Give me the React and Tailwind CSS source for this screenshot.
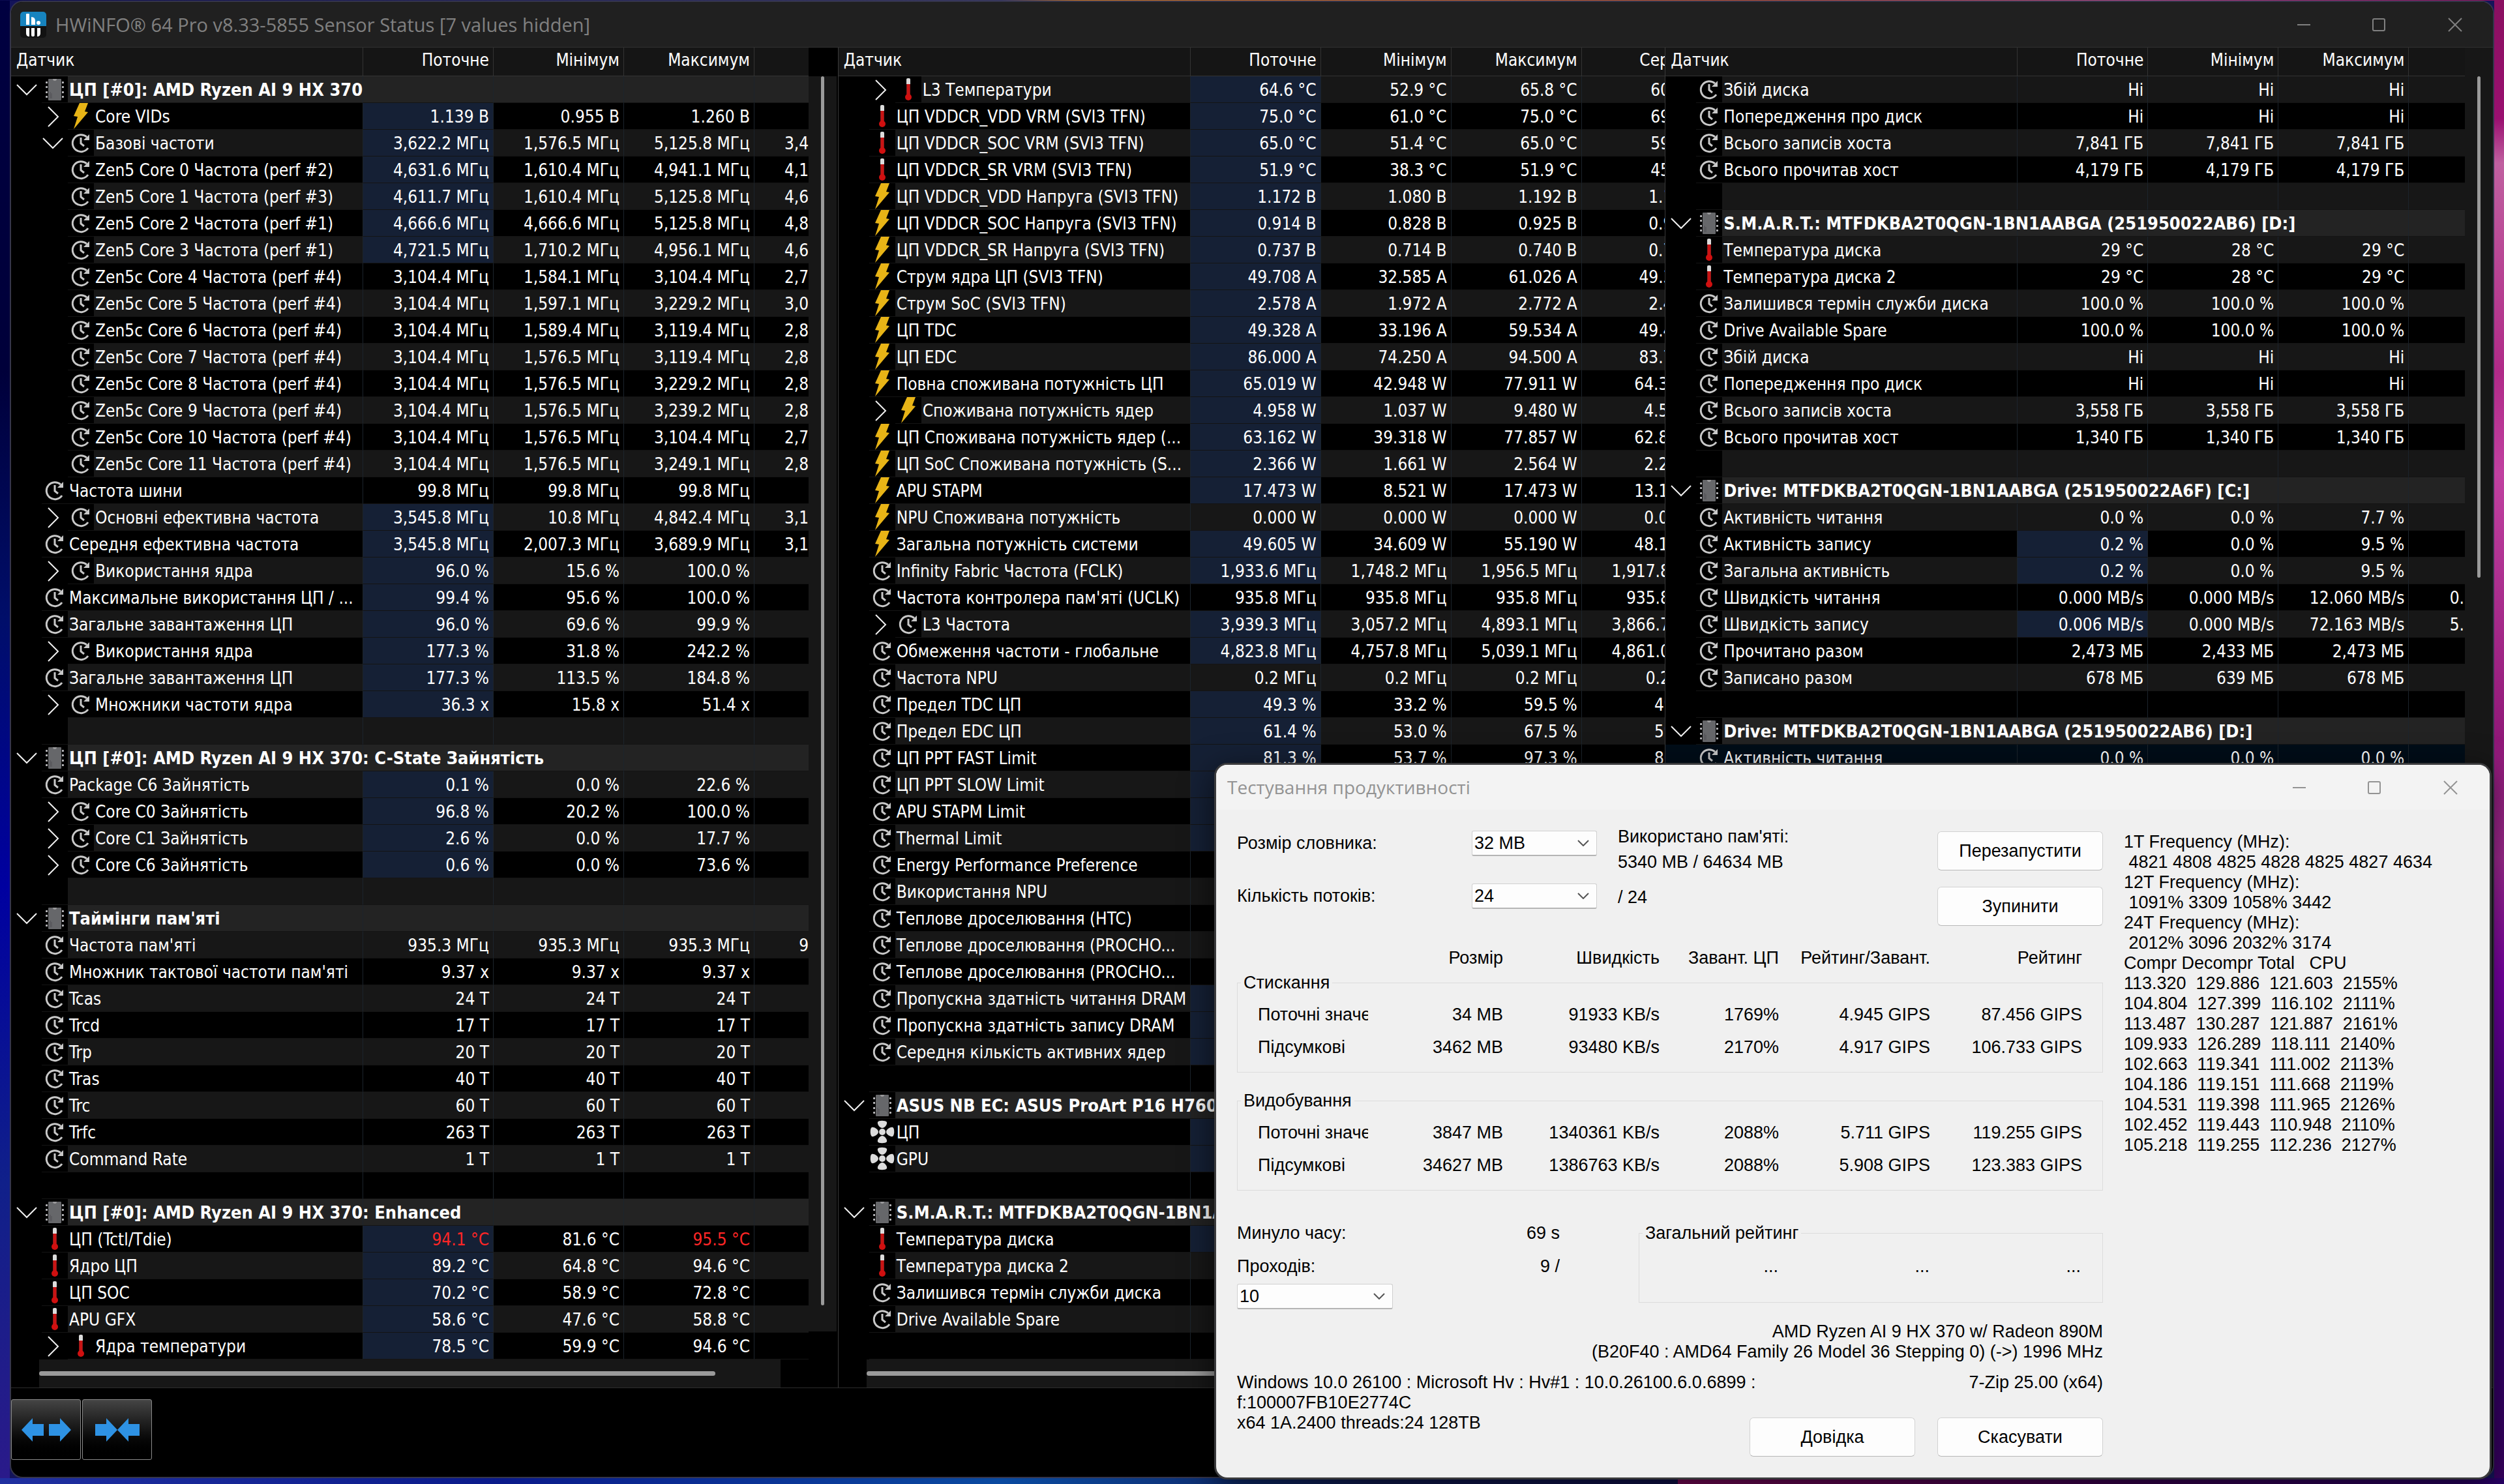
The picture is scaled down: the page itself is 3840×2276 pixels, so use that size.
import React from 'react';

// Рядки датчиків: [тип, рівень, стрілка, назва, поточне, мінімум, максимум, середнє, підсвітка]
// типи: chip (заголовок групи), clock, bolt, temp, fan, blank
const cpuRows = [
    ['chip', 0, 'down', 'ЦП [#0]: AMD Ryzen AI 9 HX 370'],
    ['bolt', 1, 'right', 'Core VIDs', '1.139 В', '0.955 В', '1.260 В', '', true],
    ['clock', 1, 'down', 'Базові частоти', '3,622.2 МГц', '1,576.5 МГц', '5,125.8 МГц', '3,412.0 МГц', true],
    ['clock', 1, '', 'Zen5 Core 0 Частота (perf #2)', '4,631.6 МГц', '1,610.4 МГц', '4,941.1 МГц', '4,180.2 МГц', true],
    ['clock', 1, '', 'Zen5 Core 1 Частота (perf #3)', '4,611.7 МГц', '1,610.4 МГц', '5,125.8 МГц', '4,602.4 МГц', true],
    ['clock', 1, '', 'Zen5 Core 2 Частота (perf #1)', '4,666.6 МГц', '4,666.6 МГц', '5,125.8 МГц', '4,802.1 МГц', true],
    ['clock', 1, '', 'Zen5 Core 3 Частота (perf #1)', '4,721.5 МГц', '1,710.2 МГц', '4,956.1 МГц', '4,620.7 МГц', true],
    ['clock', 1, '', 'Zen5c Core 4 Частота (perf #4)', '3,104.4 МГц', '1,584.1 МГц', '3,104.4 МГц', '2,790.3 МГц'],
    ['clock', 1, '', 'Zen5c Core 5 Частота (perf #4)', '3,104.4 МГц', '1,597.1 МГц', '3,229.2 МГц', '3,012.6 МГц'],
    ['clock', 1, '', 'Zen5c Core 6 Частота (perf #4)', '3,104.4 МГц', '1,589.4 МГц', '3,119.4 МГц', '2,840.5 МГц'],
    ['clock', 1, '', 'Zen5c Core 7 Частота (perf #4)', '3,104.4 МГц', '1,576.5 МГц', '3,119.4 МГц', '2,831.9 МГц'],
    ['clock', 1, '', 'Zen5c Core 8 Частота (perf #4)', '3,104.4 МГц', '1,576.5 МГц', '3,229.2 МГц', '2,865.0 МГц'],
    ['clock', 1, '', 'Zen5c Core 9 Частота (perf #4)', '3,104.4 МГц', '1,576.5 МГц', '3,239.2 МГц', '2,811.3 МГц'],
    ['clock', 1, '', 'Zen5c Core 10 Частота (perf #4)', '3,104.4 МГц', '1,576.5 МГц', '3,104.4 МГц', '2,795.8 МГц'],
    ['clock', 1, '', 'Zen5c Core 11 Частота (perf #4)', '3,104.4 МГц', '1,576.5 МГц', '3,249.1 МГц', '2,820.1 МГц'],
    ['clock', 0, '', 'Частота шини', '99.8 МГц', '99.8 МГц', '99.8 МГц', ''],
    ['clock', 1, 'right', 'Основні ефективна частота', '3,545.8 МГц', '10.8 МГц', '4,842.4 МГц', '3,190.2 МГц', true],
    ['clock', 0, '', 'Середня ефективна частота', '3,545.8 МГц', '2,007.3 МГц', '3,689.9 МГц', '3,190.2 МГц', true],
    ['clock', 1, 'right', 'Використання ядра', '96.0 %', '15.6 %', '100.0 %', '', true],
    ['clock', 0, '', 'Максимальне використання ЦП / ...', '99.4 %', '95.6 %', '100.0 %', '', true],
    ['clock', 0, '', 'Загальне завантаження ЦП', '96.0 %', '69.6 %', '99.9 %', '', true],
    ['clock', 1, 'right', 'Використання ядра', '177.3 %', '31.8 %', '242.2 %', '', true],
    ['clock', 0, '', 'Загальне завантаження ЦП', '177.3 %', '113.5 %', '184.8 %', '', true],
    ['clock', 1, 'right', 'Множники частоти ядра', '36.3 x', '15.8 x', '51.4 x', '', true],
    ['blank', 0],
    ['chip', 0, 'down', 'ЦП [#0]: AMD Ryzen AI 9 HX 370: C-State Зайнятість'],
    ['clock', 0, '', 'Package C6 Зайнятість', '0.1 %', '0.0 %', '22.6 %', '', true],
    ['clock', 1, 'right', 'Core C0 Зайнятість', '96.8 %', '20.2 %', '100.0 %', '', true],
    ['clock', 1, 'right', 'Core C1 Зайнятість', '2.6 %', '0.0 %', '17.7 %', '', true],
    ['clock', 1, 'right', 'Core C6 Зайнятість', '0.6 %', '0.0 %', '73.6 %', '', true],
    ['blank', 0],
    ['chip', 0, 'down', "Таймінги пам'яті"],
    ['clock', 0, '', "Частота пам'яті", '935.3 МГц', '935.3 МГц', '935.3 МГц', '935.3 МГц'],
    ['clock', 0, '', "Множник тактової частоти пам'яті", '9.37 x', '9.37 x', '9.37 x', ''],
    ['clock', 0, '', 'Tcas', '24 T', '24 T', '24 T', ''],
    ['clock', 0, '', 'Trcd', '17 T', '17 T', '17 T', ''],
    ['clock', 0, '', 'Trp', '20 T', '20 T', '20 T', ''],
    ['clock', 0, '', 'Tras', '40 T', '40 T', '40 T', ''],
    ['clock', 0, '', 'Trc', '60 T', '60 T', '60 T', ''],
    ['clock', 0, '', 'Trfc', '263 T', '263 T', '263 T', ''],
    ['clock', 0, '', 'Command Rate', '1 T', '1 T', '1 T', ''],
    ['blank', 0],
    ['chip', 0, 'down', 'ЦП [#0]: AMD Ryzen AI 9 HX 370: Enhanced'],
    ['temp', 0, '', 'ЦП (Tctl/Tdie)', '94.1 °C', '81.6 °C', '95.5 °C', '', true],
    ['temp', 0, '', 'Ядро ЦП', '89.2 °C', '64.8 °C', '94.6 °C', '', true],
    ['temp', 0, '', 'ЦП SOC', '70.2 °C', '58.9 °C', '72.8 °C', '', true],
    ['temp', 0, '', 'APU GFX', '58.6 °C', '47.6 °C', '58.8 °C', '', true],
    ['temp', 1, 'right', 'Ядра температури', '78.5 °C', '59.9 °C', '94.6 °C', '', true],
];

const powerRows = [
    ['temp', 1, 'right', 'L3 Температури', '64.6 °C', '52.9 °C', '65.8 °C', '60.4 °C', true],
    ['temp', 0, '', 'ЦП VDDCR_VDD VRM (SVI3 TFN)', '75.0 °C', '61.0 °C', '75.0 °C', '69.2 °C', true],
    ['temp', 0, '', 'ЦП VDDCR_SOC VRM (SVI3 TFN)', '65.0 °C', '51.4 °C', '65.0 °C', '59.3 °C', true],
    ['temp', 0, '', 'ЦП VDDCR_SR VRM (SVI3 TFN)', '51.9 °C', '38.3 °C', '51.9 °C', '45.8 °C', true],
    ['bolt', 0, '', 'ЦП VDDCR_VDD Напруга (SVI3 TFN)', '1.172 В', '1.080 В', '1.192 В', '1.154 В', true],
    ['bolt', 0, '', 'ЦП VDDCR_SOC Напруга (SVI3 TFN)', '0.914 В', '0.828 В', '0.925 В', '0.908 В', true],
    ['bolt', 0, '', 'ЦП VDDCR_SR Напруга (SVI3 TFN)', '0.737 В', '0.714 В', '0.740 В', '0.731 В', true],
    ['bolt', 0, '', 'Струм ядра ЦП (SVI3 TFN)', '49.708 А', '32.585 А', '61.026 А', '49.315 А', true],
    ['bolt', 0, '', 'Струм SoC (SVI3 TFN)', '2.578 А', '1.972 А', '2.772 А', '2.410 А', true],
    ['bolt', 0, '', 'ЦП TDC', '49.328 А', '33.196 А', '59.534 А', '49.420 А', true],
    ['bolt', 0, '', 'ЦП EDC', '86.000 А', '74.250 А', '94.500 А', '83.711 А', true],
    ['bolt', 0, '', 'Повна споживана потужність ЦП', '65.019 W', '42.948 W', '77.911 W', '64.302 W', true],
    ['bolt', 1, 'right', 'Споживана потужність ядер', '4.958 W', '1.037 W', '9.480 W', '4.512 W', true],
    ['bolt', 0, '', 'ЦП Споживана потужність ядер (...', '63.162 W', '39.318 W', '77.857 W', '62.808 W', true],
    ['bolt', 0, '', 'ЦП SoC Споживана потужність (S...', '2.366 W', '1.661 W', '2.564 W', '2.214 W', true],
    ['bolt', 0, '', 'APU STAPM', '17.473 W', '8.521 W', '17.473 W', '13.105 W', true],
    ['bolt', 0, '', 'NPU Споживана потужність', '0.000 W', '0.000 W', '0.000 W', '0.000 W'],
    ['bolt', 0, '', 'Загальна потужність системи', '49.605 W', '34.609 W', '55.190 W', '48.120 W', true],
    ['clock', 0, '', 'Infinity Fabric Частота (FCLK)', '1,933.6 МГц', '1,748.2 МГц', '1,956.5 МГц', '1,917.8 МГц', true],
    ['clock', 0, '', "Частота контролера пам'яті (UCLK)", '935.8 МГц', '935.8 МГц', '935.8 МГц', '935.8 МГц'],
    ['clock', 1, 'right', 'L3 Частота', '3,939.3 МГц', '3,057.2 МГц', '4,893.1 МГц', '3,866.7 МГц', true],
    ['clock', 0, '', 'Обмеження частоти - глобальне', '4,823.8 МГц', '4,757.8 МГц', '5,039.1 МГц', '4,861.0 МГц', true],
    ['clock', 0, '', 'Частота NPU', '0.2 МГц', '0.2 МГц', '0.2 МГц', '0.2 МГц'],
    ['clock', 0, '', 'Предел TDC ЦП', '49.3 %', '33.2 %', '59.5 %', '49.1 %', true],
    ['clock', 0, '', 'Предел EDC ЦП', '61.4 %', '53.0 %', '67.5 %', '59.8 %', true],
    ['clock', 0, '', 'ЦП PPT FAST Limit', '81.3 %', '53.7 %', '97.3 %', '80.4 %', true],
    ['clock', 0, '', 'ЦП PPT SLOW Limit', '', '', '', '', true],
    ['clock', 0, '', 'APU STAPM Limit', '', '', '', '', true],
    ['clock', 0, '', 'Thermal Limit', '', '', '', '', true],
    ['clock', 0, '', 'Energy Performance Preference'],
    ['clock', 0, '', 'Використання NPU'],
    ['clock', 0, '', 'Теплове дроселювання (HTC)'],
    ['clock', 0, '', 'Теплове дроселювання (PROCHO...'],
    ['clock', 0, '', 'Теплове дроселювання (PROCHO...'],
    ['clock', 0, '', 'Пропускна здатність читання DRAM', '', '', '', '', true],
    ['clock', 0, '', 'Пропускна здатність запису DRAM', '', '', '', '', true],
    ['clock', 0, '', 'Середня кількість активних ядер', '', '', '', '', true],
    ['blank', 0],
    ['chip', 0, 'down', 'ASUS NB EC: ASUS ProArt P16 H760'],
    ['fan', 0, '', 'ЦП', '', '', '', '', true],
    ['fan', 0, '', 'GPU', '', '', '', '', true],
    ['blank', 0],
    ['chip', 0, 'down', 'S.M.A.R.T.: MTFDKBA2T0QGN-1BN1A'],
    ['temp', 0, '', 'Температура диска', '', '', '', '', true],
    ['temp', 0, '', 'Температура диска 2'],
    ['clock', 0, '', 'Залишився термін служби диска'],
    ['clock', 0, '', 'Drive Available Spare'],
    ['blank', 0],
];

const driveRows = [
    ['clock', 0, '', 'Збій диска', 'Ні', 'Ні', 'Ні', ''],
    ['clock', 0, '', 'Попередження про диск', 'Ні', 'Ні', 'Ні', ''],
    ['clock', 0, '', 'Всього записів хоста', '7,841 ГБ', '7,841 ГБ', '7,841 ГБ', ''],
    ['clock', 0, '', 'Всього прочитав хост', '4,179 ГБ', '4,179 ГБ', '4,179 ГБ', ''],
    ['blank', 0],
    ['chip', 0, 'down', 'S.M.A.R.T.: MTFDKBA2T0QGN-1BN1AABGA (251950022AB6) [D:]'],
    ['temp', 0, '', 'Температура диска', '29 °C', '28 °C', '29 °C', ''],
    ['temp', 0, '', 'Температура диска 2', '29 °C', '28 °C', '29 °C', ''],
    ['clock', 0, '', 'Залишився термін служби диска', '100.0 %', '100.0 %', '100.0 %', ''],
    ['clock', 0, '', 'Drive Available Spare', '100.0 %', '100.0 %', '100.0 %', ''],
    ['clock', 0, '', 'Збій диска', 'Ні', 'Ні', 'Ні', ''],
    ['clock', 0, '', 'Попередження про диск', 'Ні', 'Ні', 'Ні', ''],
    ['clock', 0, '', 'Всього записів хоста', '3,558 ГБ', '3,558 ГБ', '3,558 ГБ', ''],
    ['clock', 0, '', 'Всього прочитав хост', '1,340 ГБ', '1,340 ГБ', '1,340 ГБ', ''],
    ['blank', 0],
    ['chip', 0, 'down', 'Drive: MTFDKBA2T0QGN-1BN1AABGA (251950022A6F) [C:]'],
    ['clock', 0, '', 'Активність читання', '0.0 %', '0.0 %', '7.7 %', ''],
    ['clock', 0, '', 'Активність запису', '0.2 %', '0.0 %', '9.5 %', '', true],
    ['clock', 0, '', 'Загальна активність', '0.2 %', '0.0 %', '9.5 %', '', true],
    ['clock', 0, '', 'Швидкість читання', '0.000 MB/s', '0.000 MB/s', '12.060 MB/s', '0.801 MB/s'],
    ['clock', 0, '', 'Швидкість запису', '0.006 MB/s', '0.000 MB/s', '72.163 MB/s', '5.512 MB/s', true],
    ['clock', 0, '', 'Прочитано разом', '2,473 МБ', '2,433 МБ', '2,473 МБ', ''],
    ['clock', 0, '', 'Записано разом', '678 МБ', '639 МБ', '678 МБ', ''],
    ['blank', 0],
    ['chip', 0, 'down', 'Drive: MTFDKBA2T0QGN-1BN1AABGA (251950022AB6) [D:]'],
    ['selected', 0, '', 'Активність читання', '0.0 %', '0.0 %', '0.0 %', ''],
];

const compressRows = [
    ['Поточні значення', '34 MB', '91933 KB/s', '1769%', '4.945 GIPS', '87.456 GIPS'],
    ['Підсумкові', '3462 MB', '93480 KB/s', '2170%', '4.917 GIPS', '106.733 GIPS'],
];

const decompressRows = [
    ['Поточні значення', '3847 MB', '1340361 KB/s', '2088%', '5.711 GIPS', '119.255 GIPS'],
    ['Підсумкові', '34627 MB', '1386763 KB/s', '2088%', '5.908 GIPS', '123.383 GIPS'],
];

const benchLog = `1T Frequency (MHz):
 4821 4808 4825 4828 4825 4827 4634
12T Frequency (MHz):
 1091% 3309 1058% 3442
24T Frequency (MHz):
 2012% 3096 2032% 3174
Compr Decompr Total   CPU
113.320  129.886  121.603  2155%
104.804  127.399  116.102  2111%
113.487  130.287  121.887  2161%
109.933  126.289  118.111  2140%
102.663  119.341  111.002  2113%
104.186  119.151  111.668  2119%
104.531  119.398  111.965  2126%
102.452  119.443  110.948  2110%
105.218  119.255  112.236  2127%`;

function RowIcon({ type }) {
    if (type === 'chip') {
        return (
            <svg className="size-10" viewBox="0 0 40 40">
                <g fill="#b5b5b8">
                    <rect x="6" y="8" width="28" height="3" rx="1" />
                    <rect x="6" y="15" width="28" height="3" rx="1" />
                    <rect x="6" y="23" width="28" height="3" rx="1" />
                    <rect x="6" y="30" width="28" height="3" rx="1" />
                </g>
                <rect x="9" y="4" width="22" height="33" rx="1" fill="#000" />
                <rect x="10" y="4" width="20" height="33" rx="1" fill="#66676a" />
                <path d="M17 4a3 3 0 0 0 6 0z" fill="#9a9a9c" />
                <path d="M13 24v10M15 26v8" stroke="#505154" />
            </svg>
        );
    }
    if (type === 'bolt') {
        return (
            <svg className="size-10" viewBox="0 0 40 40">
                <path d="M18 0h13l-5 13 5 1L9 40l6-19-6-1z" fill="#e8b416" />
            </svg>
        );
    }
    if (type === 'temp') {
        return (
            <svg className="size-10" viewBox="0 0 40 40">
                <rect x="17" y="3" width="6" height="29" rx="2" fill="#dcdcdc" />
                <rect x="17" y="12" width="6" height="19" fill="#8a1a1a" />
                <rect x="18" y="12" width="4" height="19" fill="#c81414" />
                <circle cx="20" cy="32" r="5" fill="#d01010" />
            </svg>
        );
    }
    if (type === 'fan') {
        return (
            <svg className="size-10" viewBox="0 0 40 40" fill="#dcdcdc">
                <path d="M13 5c1-3 12-3 14 0 1 3-3 9-7 9s-8-6-7-9z" />
                <path d="M13 35c1 3 12 3 14 0 1-3-3-9-7-9s-8 6-7 9z" />
                <path d="M4 13c-3 1-3 12 0 14 3 1 10-3 10-7S7 12 4 13z" />
                <path d="M36 13c3 1 3 12 0 14-3 1-10-3-10-7s7-8 10-7z" />
                <circle cx="20" cy="20" r="5" />
            </svg>
        );
    }
    return (
        <svg className="size-10" viewBox="0 0 40 40" fill="none" stroke="#c8c8c8">
            <path d="M29 11A13 13 0 1 0 31 28" strokeWidth="3" />
            <path d="M33 7v9h-9z" fill="#c8c8c8" stroke="none" />
            <path d="M20 12v9l5 4" strokeWidth="3" />
        </svg>
    );
}

function Chevron({ dir }) {
    return (
        <svg className="size-10" viewBox="0 0 40 40" fill="none" stroke="#f0f0f0" strokeWidth="2">
            {dir === 'down' ? <path d="M5 13l15 15 15-15" /> : <path d="M13 6l15 15-15 15" />}
        </svg>
    );
}

function SensorRow({ row, index }) {
    const [type, level, arrow, name, current, min, max, avg, hot] = row;
    const header = type === 'chip';
    const selected = type === 'selected';
    let bg = index % 2 ? 'bg-black' : 'bg-[#171717]';
    if (header) bg = 'bg-[#232323]';
    if (selected) bg = 'bg-[#000d18]';
    const gutter = selected ? '' : 'bg-black';
    const over = name && name.includes('Tctl');
    return (
        <tr className={bg}>
            <td className="p-0">
                <div className="flex h-[41px]">
                    <div className={`flex shrink-0 justify-end pr-[3px] ${gutter} ${level ? 'w-[87px]' : 'w-[47px]'}`}>
                        {arrow && <Chevron dir={arrow} />}
                    </div>
                    <div className={`w-10 shrink-0 border-b border-[#141414] ${gutter}`}>
                        {type !== 'blank' && <RowIcon type={type} />}
                    </div>
                    <div className={`flex-1 border-b border-[#141414] pl-[2px] whitespace-nowrap leading-[42px] ${header ? 'text-[27px] font-bold' : ''}`}>
                        {name}
                    </div>
                </div>
            </td>
            {[current, min, max, avg].map((value, i) => (
                <td
                    key={i}
                    className={`border-b border-l border-b-[#141414] border-l-[#1c242c] p-0 pt-[2px] pr-[6px] text-right whitespace-nowrap leading-[36px] ${i === 0 && hot ? 'bg-[#152035]' : ''} ${over && i !== 1 ? 'text-[#ff2626]' : ''}`}
                >
                    {value}
                </td>
            ))}
        </tr>
    );
}

function SensorTable({ rows, avgTitle }) {
    return (
        <table className="w-[1339px] table-fixed border-separate border-spacing-0">
            <colgroup>
                <col className="w-[539px]" />
                <col className="w-[200px]" />
                <col className="w-[200px]" />
                <col className="w-[200px]" />
                <col className="w-[200px]" />
            </colgroup>
            <thead>
                <tr className="h-[44px] bg-[#151515] align-top leading-[38px]">
                    <th className="border-b border-[#333333] p-0 pl-[8px] text-left font-normal">Датчик</th>
                    {['Поточне', 'Мінімум', 'Максимум', avgTitle].map((title, i) => (
                        <th key={i} className="border-b border-l border-[#333333] p-0 pr-[6px] text-right font-normal">{title}</th>
                    ))}
                </tr>
            </thead>
            <tbody>
                {rows.map((row, i) => <SensorRow key={i} row={row} index={i} />)}
            </tbody>
        </table>
    );
}

function WindowButtons() {
    return (
        <div className="flex h-full items-center gap-[74px]">
            <button type="button" aria-label="Згорнути">
                <svg className="h-[22px] w-[42px]" viewBox="0 0 42 22" fill="none" stroke="currentColor" strokeWidth="2"><path d="M11 11h20" /></svg>
            </button>
            <button type="button" aria-label="Розгорнути">
                <svg className="h-[22px] w-[42px]" viewBox="0 0 42 22" fill="none" stroke="currentColor" strokeWidth="2"><rect x="11" y="2" width="18" height="18" rx="2" /></svg>
            </button>
            <button type="button" aria-label="Закрити">
                <svg className="h-[22px] w-[42px]" viewBox="0 0 42 22" fill="none" stroke="currentColor" strokeWidth="2"><path d="M11 1l20 20M31 1L11 21" /></svg>
            </button>
        </div>
    );
}

function Combo({ id, value, wide }) {
    return (
        <div className={`relative h-[39px] ${wide ? 'w-[239px]' : 'w-[192px]'}`}>
            <select
                id={id}
                defaultValue={value}
                className="h-full w-full appearance-none rounded-[3px] border border-b-2 border-[#d0d0d0] border-b-[#b5b5b5] bg-[#fdfdfd] pl-[3px]"
            >
                <option>{value}</option>
            </select>
            <svg className="pointer-events-none absolute top-[14px] right-[12px] h-[10px] w-[18px]" viewBox="0 0 18 10" fill="none" stroke="#555" strokeWidth="2">
                <path d="M1 1l8 8 8-8" />
            </svg>
        </div>
    );
}

function DialogButton({ children }) {
    return (
        <button type="button" className="h-[60px] w-[254px] rounded-[6px] border border-[#d2d2d2] border-b-[#b8b8b8] bg-[#fdfdfd]">
            {children}
        </button>
    );
}

function ResultGroup({ title, rows }) {
    return (
        <fieldset className="min-w-0 border border-[#dcdcdc] pt-[8px] pb-[13px]">
            <legend className="ml-[5px] px-[4px]">{title}</legend>
            <table className="w-full table-fixed">
                <tbody>
                    {rows.map((row, i) => (
                        <tr key={i} className="h-[50px]">
                            <th className="w-[200px] p-0 pl-[31px] text-left font-normal">
                                <div className="overflow-hidden whitespace-nowrap">{row[0]}</div>
                            </th>
                            <td className="w-[207px] text-right">{row[1]}</td>
                            <td className="w-[240px] text-right">{row[2]}</td>
                            <td className="w-[183px] text-right">{row[3]}</td>
                            <td className="w-[232px] text-right">{row[4]}</td>
                            <td className="pr-[31px] text-right">{row[5]}</td>
                        </tr>
                    ))}
                </tbody>
            </table>
        </fieldset>
    );
}

function BenchmarkDialog() {
    return (
        <section className="absolute right-[19px] bottom-[7px] w-[1959px] overflow-hidden rounded-[20px] border-3 border-[#3a3a3c] bg-[#f0f0f0] font-['Liberation_Sans',Arial,sans-serif] text-[27px] leading-[31px] text-black shadow-[0_12px_50px_rgba(0,0,0,0.6)]">
            <header className="flex h-[69px] items-center justify-between bg-[#f3f3f3] pr-[39px] pl-[17px] text-[#939393]">
                <h2 className="font-['Open_Sans','Noto_Sans',sans-serif] text-[28px]">Тестування продуктивності</h2>
                <WindowButtons />
            </header>

            <div className="flex gap-[32px] pt-[22px] pb-[32px] pl-[32px]">
                <div className="w-[1328px] shrink-0">
                    {/* Параметри тесту */}
                    <div className="flex">
                        <div className="flex flex-col gap-[42px] pt-[10px]">
                            <div className="flex items-center">
                                <label htmlFor="dict" className="w-[360px]">Розмір словника:</label>
                                <Combo id="dict" value="32 MB" />
                            </div>
                            <div className="flex items-center">
                                <label htmlFor="threads" className="w-[360px]">Кількість потоків:</label>
                                <Combo id="threads" value="24" />
                            </div>
                        </div>
                        <div className="flex-1 pl-[32px] leading-[39px]">
                            <p>Використано пам'яті:</p>
                            <p>5340 MB / 64634 MB</p>
                            <p className="mt-[15px]">/ 24</p>
                        </div>
                        <div className="flex flex-col gap-[25px] pt-[11px]">
                            <DialogButton>Перезапустити</DialogButton>
                            <DialogButton>Зупинити</DialogButton>
                        </div>
                    </div>

                    {/* Результати */}
                    <div className="mt-[34px] mb-[7px] flex text-right">
                        <span className="w-[408px]">Розмір</span>
                        <span className="w-[240px]">Швидкість</span>
                        <span className="w-[183px]">Завант. ЦП</span>
                        <span className="w-[232px]">Рейтинг/Завант.</span>
                        <span className="w-[233px]">Рейтинг</span>
                    </div>
                    <div className="flex flex-col gap-[28px]">
                        <ResultGroup title="Стискання" rows={compressRows} />
                        <ResultGroup title="Видобування" rows={decompressRows} />
                    </div>

                    {/* Час, проходи та загальний рейтинг */}
                    <div className="mt-[50px] flex justify-between">
                        <div className="w-[495px]">
                            <div className="flex justify-between">
                                <span>Минуло часу:</span>
                                <span>69 s</span>
                            </div>
                            <div className="mt-[20px] mb-[11px] flex justify-between">
                                <label htmlFor="passes">Проходів:</label>
                                <span>9 /</span>
                            </div>
                            <Combo id="passes" value="10" wide />
                        </div>
                        <fieldset className="flex h-[122px] w-[712px] border border-[#dcdcdc] pt-[20px] text-right">
                            <legend className="ml-[5px] px-[4px] text-left">Загальний рейтинг</legend>
                            <span className="w-[213px]">...</span>
                            <span className="w-[232px]">...</span>
                            <span className="w-[232px]">...</span>
                        </fieldset>
                    </div>

                    {/* Відомості про систему */}
                    <div className="mt-[19px] text-right">
                        <p>AMD Ryzen AI 9 HX 370 w/ Radeon 890M</p>
                        <p>(B20F40 : AMD64 Family 26 Model 36 Stepping 0) (-&gt;) 1996 MHz</p>
                    </div>
                    <div className="mt-[16px] flex justify-between">
                        <p>Windows 10.0 26100 : Microsoft Hv : Hv#1 : 10.0.26100.6.0.6899 :</p>
                        <p>7-Zip 25.00 (x64)</p>
                    </div>
                    <div className="flex justify-between">
                        <p>f:100007FB10E2774C<br />x64 1A.2400 threads:24 128TB</p>
                        <div className="mt-[38px] flex gap-[34px]">
                            <DialogButton>Довідка</DialogButton>
                            <DialogButton>Скасувати</DialogButton>
                        </div>
                    </div>
                </div>
                <pre className="mt-[12px] font-['Liberation_Sans',Arial,sans-serif]">{benchLog}</pre>
            </div>
        </section>
    );
}

function ArrowLeft() {
    return <path d="M0 18L17 0v9h17v18H17v9z" />;
}

function ToolButton({ label, children }) {
    return (
        <button type="button" aria-label={label} className="flex h-[93px] w-[107px] items-center justify-center rounded-[3px] border border-[#8a8a8a] bg-gradient-to-b from-[#454545] to-black">
            {children}
        </button>
    );
}

export default function App() {
    return (
        <div className="relative flex min-h-screen flex-col overflow-hidden bg-[#14145a]">
            {/* Смуги шпалер навколо вікна */}
            <div className="h-px bg-[linear-gradient(90deg,#0a0a50_0%,#3a3a6a_40%,#c8762a_43%,#b8503a_70%,#b04a8a_85%,#8a1060_100%)]" />
            <div className="flex flex-1">
                <div className="w-[15px] shrink-0 bg-[linear-gradient(180deg,#000040_0%,#00003a_25%,#000e6a_42%,#0000a0_60%,#10208a_80%,#2a1a8a_100%)]" />

                <main className="flex min-w-0 flex-1 flex-col overflow-hidden rounded-[20px] border-2 border-[#35354a] bg-black font-['DejaVu_Sans_Condensed','Noto_Sans',sans-serif] text-[26px] text-white">
                    <header className="flex h-[70px] items-center justify-between border-b border-[#303030] bg-[#202020] pr-[37px] pl-[14px] text-[#808080]">
                        <div className="flex items-center gap-[14px]">
                            <svg className="size-10" viewBox="0 0 40 40">
                                <rect width="40" height="40" rx="5" fill="#121212" />
                                <path d="M0 22V5a5 5 0 0 1 5-5h30a5 5 0 0 1 5 5v17z" fill="#1784bf" />
                                <g fill="#fff">
                                    <path d="M9 4q0-1 1-1h3q1 0 1 1v16H9z" />
                                    <path d="M17 8q6 0 6 6v6h-6z" />
                                    <circle cx="28" cy="17" r="3" />
                                    <path d="M9 25h5v13q-5 0-5-5zM17 25h5v11q0 2-3 2-2 0-2-2zM26 25h5v8q0 5-5 5z" />
                                </g>
                            </svg>
                            <h1 className="font-['Open_Sans','Noto_Sans',sans-serif] text-[29px]">HWiNFO® 64 Pro v8.33-5855 Sensor Status [7 values hidden]</h1>
                        </div>
                        <WindowButtons />
                    </header>

                    <div className="grid grid-cols-3 border-b border-[#2d2d2d]">
                        <div className="flex min-w-0 flex-col border-r border-[#3a3a3a]">
                            <div className="flex">
                                <div className="min-w-0 flex-1 overflow-hidden">
                                    <SensorTable rows={cpuRows} avgTitle="" />
                                </div>
                                <div className="mt-[44px] mr-[2px] mb-[43px] w-[43px] shrink-0 bg-[#171717] px-[19px] pb-[40px]">
                                    <div className="h-full rounded-full bg-[#9a9a9a]" />
                                </div>
                            </div>
                            <div className="mr-[88px] ml-[43px] h-[43px] bg-[#171717] pt-[18px] pr-[100px]">
                                <div className="h-[7px] rounded-full bg-[#9a9a9a]" />
                            </div>
                        </div>

                        <div className="flex min-w-0 flex-col overflow-hidden border-r border-[#3a3a3a]">
                            <SensorTable rows={powerRows} avgTitle="Середнє" />
                            <div className="ml-[43px] h-[43px] bg-[#171717] pt-[18px] pr-[100px]">
                                <div className="h-[7px] rounded-full bg-[#9a9a9a]" />
                            </div>
                        </div>

                        <div className="flex min-w-0 bg-[#171717]">
                            <div className="min-w-0 flex-1 overflow-hidden bg-black">
                                <SensorTable rows={driveRows} avgTitle="" />
                            </div>
                            <div className="mt-[44px] w-[43px] shrink-0 px-[19px]">
                                <div className="h-[769px] rounded-full bg-[#9a9a9a]" />
                            </div>
                        </div>
                    </div>

                    <div className="flex flex-1 gap-[2px] pt-[17px]">
                        <ToolButton label="Розширити стовпці">
                            <svg className="h-[36px] w-[76px]" viewBox="0 0 76 36" fill="#2e92e4">
                                <ArrowLeft />
                                <g transform="matrix(-1 0 0 1 76 0)"><ArrowLeft /></g>
                            </svg>
                        </ToolButton>
                        <ToolButton label="Звузити стовпці">
                            <svg className="h-[36px] w-[68px]" viewBox="0 0 68 36" fill="#2e92e4">
                                <g transform="translate(34 0)"><ArrowLeft /></g>
                                <g transform="matrix(-1 0 0 1 34 0)"><ArrowLeft /></g>
                            </svg>
                        </ToolButton>
                    </div>
                </main>

                <div className="w-[15px] shrink-0 bg-[linear-gradient(180deg,#8a1060_0%,#9a1070_8%,#c060a0_11%,#b02a88_25%,#c040a0_32%,#901878_50%,#a02a90_58%,#7a00a8_66%,#2a0070_80%,#380060_100%)]" />
            </div>
            <div className="h-[9px] bg-[linear-gradient(90deg,#2030a0_0%,#0a1a8a_20%,#0a4aa0_40%,#101a50_55%,#10104a_67%,#7a0a58_67%,#3a0050_85%,#280068_100%)]" />

            <BenchmarkDialog />
        </div>
    );
}
